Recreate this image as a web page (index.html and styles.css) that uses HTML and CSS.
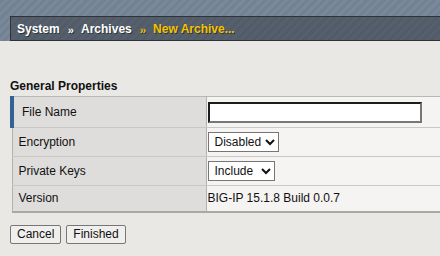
FILE: index.html
```html
<!DOCTYPE html>
<html lang="en">
<head>
    <meta charset="UTF-8" />
    <title>New Archive</title>
    <link rel="stylesheet" href="styles.css">
</head>
<body>
<div class="banner">
    <div class="crumbs">
        <span class="crumb">System</span>
        <span class="sep">&rsaquo;&rsaquo;</span>
        <span class="crumb">Archives</span>
        <span class="sep current">&rsaquo;&rsaquo;</span>
        <span class="crumb current">New Archive...</span>
    </div>
</div>

<main class="content">
    <h2 class="section-title">General Properties</h2>
    <table class="props">
        <tr class="required">
            <td class="label">File Name</td>
            <td class="value"><input type="text" class="text-input"></td>
        </tr>
        <tr>
            <td class="label">Encryption</td>
            <td class="value">
                <select class="pick pick-enc">
                    <option>Disabled</option>
                    <option>Enabled</option>
                </select>
            </td>
        </tr>
        <tr>
            <td class="label">Private Keys</td>
            <td class="value">
                <select class="pick pick-keys">
                    <option>Include</option>
                    <option>Exclude</option>
                </select>
            </td>
        </tr>
        <tr>
            <td class="label">Version</td>
            <td class="value">BIG-IP 15.1.8 Build 0.0.7</td>
        </tr>
    </table>

    <div class="actions">
        <button class="btn">Cancel</button>
        <button class="btn">Finished</button>
    </div>
</main>
</body>
</html>
```

FILE: styles.css
```css
* {
    box-sizing: border-box;
    margin: 0;
    padding: 0;
}

body {
    font-family: 'Liberation Sans', Arial, sans-serif;
    font-size: 12px;
    color: #111;
    background: #e9e8e4;
}

.banner {
    background: repeating-linear-gradient(135deg, #728193 0, #728193 3px, #7a899a 3px, #7a899a 6px);
    padding-top: 16px;
    padding-left: 10px;
}

.crumbs {
    height: 25px;
    background: repeating-linear-gradient(135deg, #525c68 0, #525c68 3px, #56606c 3px, #56606c 6px);
    border-top: 1px solid #2f3338;
    border-bottom: 1px solid #2f3338;
    border-left: 1px solid #2f3338;
    display: flex;
    align-items: center;
    padding-left: 6px;
    font-weight: bold;
    font-size: 12px;
    color: #fff;
    text-shadow: 1px 1px 0 rgba(0, 0, 0, 0.45);
}

.crumb {
    margin-right: 8px;
}

.sep {
    font-size: 11px;
    margin-right: 8px;
    letter-spacing: -1px;
    position: relative;
    top: 1px;
}

.current {
    color: #f5c400;
}

.content {
    padding: 0 0 0 10px;
}

.section-title {
    font-size: 12px;
    font-weight: bold;
    margin-top: 36px;
    height: 19px;
    line-height: 18px;
}

.props {
    width: 100%;
    border-collapse: collapse;
    border-top: 1px solid #b9b8b4;
    border-bottom: 2px solid #a9a8a4;
    border-left: 1px solid #b3b2ae;
}

.props td {
    border-bottom: 1px solid #c9c8c4;
    height: 29px;
    vertical-align: middle;
}

.props tr.required td {
    height: 31px;
}

.props tr:last-child td {
    border-bottom: none;
    height: 26px;
}

.label {
    width: 194px;
    background: #dedddb;
    border-right: 1px solid #b3b2ae;
    padding-left: 6px;
}

.required .label {
    border-left: 4px solid #336294;
    padding-left: 8px;
}

.value {
    background: #f5f4f2;
    padding-left: 1px;
    color: #111;
}

.text-input {
    display: block;
    width: 214px;
    height: 21px;
    border: 2px solid #777;
    border-top-color: #1d1d1d;
    border-left-color: #1d1d1d;
    background: #fff;
    font-family: inherit;
    font-size: 12px;
}

.pick {
    display: block;
    height: 20px;
    font-family: inherit;
    font-size: 12px;
    border: 1px solid #767676;
    background: #fff;
    color: #111;
    padding-left: 2px;
}

.pick-enc {
    width: 71px;
}

.pick-keys {
    width: 67px;
}

.actions {
    display: flex;
    gap: 5px;
    margin-top: 12px;
}

.btn {
    font-family: inherit;
    font-size: 12px;
    height: 19px;
    padding: 0 6px;
    background: #f0efed;
    border: 1px solid #767676;
    border-radius: 2px;
    color: #111;
}
```
